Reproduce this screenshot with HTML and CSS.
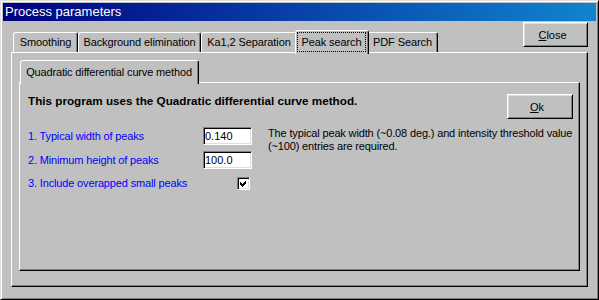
FILE: index.html
```html
<!DOCTYPE html>
<html lang="en">

<head>
  <meta charset="UTF-8">
  <title>Process parameters</title>
  <link rel="stylesheet" href="styles.css">
</head>

<body>
  <div class="window">
    <div class="titlebar">Process parameters</div>
    <div class="window-body">
      <!-- outer tabs + close button -->
      <div class="tabstrip">
        <div class="tab tab-smoothing">Smoothing</div>
        <div class="tab tab-bg">Background elimination</div>
        <div class="tab tab-ka">Ka1,2 Separation</div>
        <div class="tab tab-peak active"><span class="focus">Peak search</span></div>
        <div class="tab tab-pdf">PDF Search</div>
        <button class="btn btn-close"><u>C</u>lose</button>
      </div>
      <div class="page">
        <div class="tabstrip inner-strip">
          <div class="tab tab-method active">Quadratic differential curve method</div>
        </div>
        <div class="page subpage">
          <div class="sub-header">
            <div class="heading">This program uses the Quadratic differential curve method.</div>
            <button class="btn btn-ok"><u>O</u>k</button>
          </div>
          <div class="params">
            <label class="param-label">1. Typical width of peaks</label>
            <input class="field" type="text" value="0.140">
            <div class="note">The typical peak width (~0.08 deg.) and intensity threshold value<br>(~100) entries are required.</div>
            <label class="param-label">2. Minimum height of peaks</label>
            <input class="field" type="text" value="100.0">
            <label class="param-label">3. Include overapped small peaks</label>
            <div class="check">
              <svg width="9" height="9" viewBox="0 0 9 9" shape-rendering="crispEdges">
                <polygon points="1,3 3,5 7,1 7,4 3,8 1,6" fill="#000" />
              </svg>
            </div>
          </div>
        </div>
      </div>
    </div>
  </div>
</body>

</html>
```

FILE: styles.css
```css
body {
  margin: 0px;
  font-family: "Liberation Sans", Arial, sans-serif;
  font-size: 11px;
  color: #000000;
}

.window {
  width: 599px;
  height: 300px;
  box-sizing: border-box;
  background: #c0c0c0;
  border: 1px solid;
  border-color: #dfdfdf #000000 #000000 #dfdfdf;
  box-shadow: inset 1px 1px #ffffff, inset -1px -1px #808080;
  padding: 2px;
  display: flex;
  flex-direction: column;
}

.titlebar {
  height: 18px;
  line-height: 18px;
  padding-left: 2px;
  color: #ffffff;
  font-size: 13px;
  background: linear-gradient(to right, #000080, #1084d0);
}

.window-body {
  flex: 1;
  display: flex;
  flex-direction: column;
  padding: 1px 8px 10px 8px;
}

.tabstrip {
  display: flex;
  align-items: flex-end;
  height: 30px;
  padding-left: 2px;
}

.tab {
  height: 20px;
  box-sizing: border-box;
  border: 1px solid;
  border-bottom: 0px;
  border-color: #ffffff #000000 transparent #ffffff;
  border-radius: 3px 3px 0px 0px;
  box-shadow: inset -1px 0px #808080;
  display: flex;
  align-items: center;
  justify-content: center;
  white-space: nowrap;
  padding-bottom: 1px;
  letter-spacing: -0.1px;
}

.tab.active {
  height: 24px;
  margin: 0px -2px -2px -2px;
  padding: 1px 2px 2px 1px;
  position: relative;
  z-index: 1;
  background: #c0c0c0;
}

.tab-smoothing { width: 65px; }
.tab-bg { width: 123px; }
.tab-ka { width: 96px; }
.tab-peak { width: 74px; }
.tab-pdf { width: 71px; }

.focus {
  flex: 1;
  align-self: stretch;
  display: flex;
  align-items: center;
  justify-content: center;
  border: 1px dotted #000000;
}

.btn {
  font-family: inherit;
  font-size: 11px;
  color: #000000;
  background: #c0c0c0;
  border: 1px solid;
  border-color: #ffffff #000000 #000000 #ffffff;
  box-shadow: inset 1px 1px #dfdfdf, inset -1px -1px #808080;
  padding: 0px 6px 0px 0px;
  height: 25px;
}

.btn-close {
  width: 65px;
  margin-left: auto;
  align-self: flex-start;
}

.btn-ok {
  width: 66px;
}

.page {
  flex: 1;
  display: flex;
  flex-direction: column;
  border: 1px solid;
  border-color: #ffffff #000000 #000000 #ffffff;
  box-shadow: inset -1px -1px #808080;
  padding: 9px 7px 15px 7px;
}

.inner-strip {
  height: 20px;
  padding-left: 3px;
}

.tab-method {
  width: 179px;
  height: 22px;
  padding: 2px 0px 0px 4px;
  letter-spacing: -0.15px;
}

.subpage {
  padding: 11px 6px 0px 8px;
}

.sub-header {
  display: flex;
  align-items: flex-start;
}

.heading {
  flex: 1;
  font-weight: bold;
  font-size: 11.7px;
  line-height: 13px;
}

.params {
  display: grid;
  grid-template-columns: 175px 49px 1fr;
  grid-template-rows: 18px 18px 16px;
  row-gap: 6px;
  margin-top: 8px;
  letter-spacing: -0.15px;
}

.param-label {
  color: #0000ff;
  align-self: center;
  white-space: nowrap;
}

.field {
  width: 49px;
  height: 18px;
  box-sizing: border-box;
  margin: 0px;
  border: 1px solid;
  border-color: #808080 #ffffff #ffffff #808080;
  box-shadow: inset 1px 1px #000000, inset -1px -1px #dfdfdf;
  padding: 0px 0px 0px 1px;
  font-family: inherit;
  font-size: 11px;
  background: #ffffff;
  outline: none;
}

.note {
  grid-column: 3;
  grid-row: 1 / span 2;
  margin-left: 16px;
  line-height: 13px;
  white-space: nowrap;
}

.check {
  grid-column: 2;
  justify-self: end;
  align-self: center;
  margin-right: 2px;
  width: 13px;
  height: 13px;
  box-sizing: border-box;
  border: 1px solid;
  border-color: #808080 #ffffff #ffffff #808080;
  box-shadow: inset 1px 1px #000000, inset -1px -1px #dfdfdf;
  background: #ffffff;
  padding: 1px;
}

.check svg {
  display: block;
}
```
